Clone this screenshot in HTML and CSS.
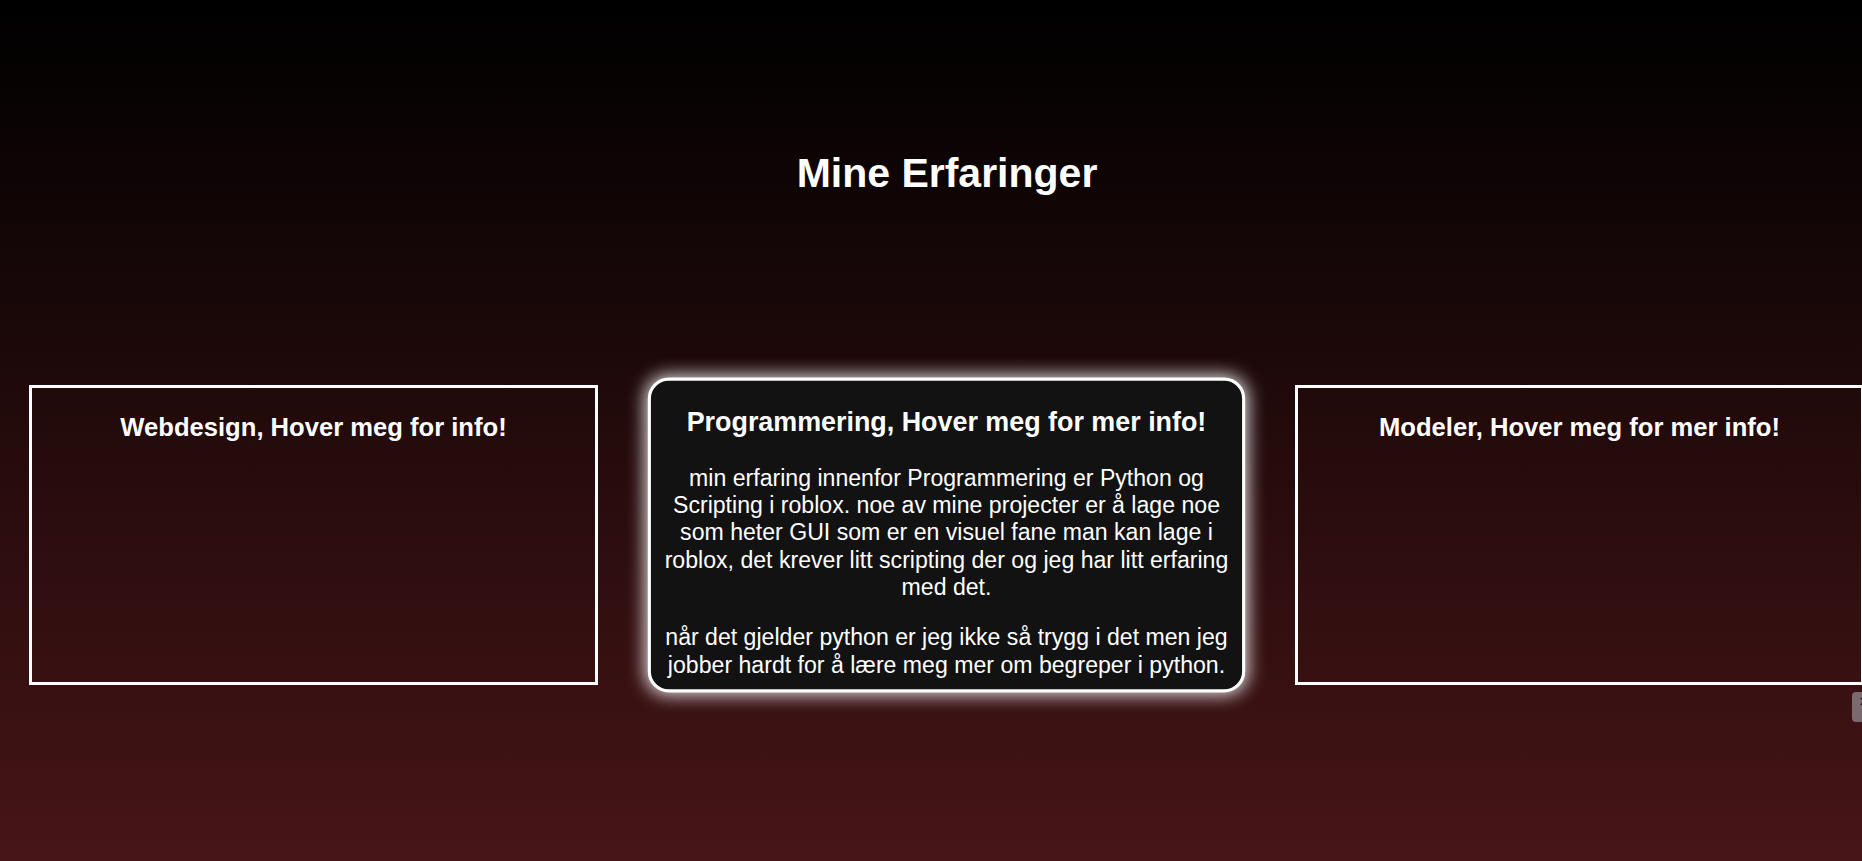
FILE: index.html
```html
<!DOCTYPE html>
<html lang="no">
<head>
<meta charset="utf-8">
<title>Mine Erfaringer</title>
<link rel="stylesheet" href="styles.css">
</head>
<body>
<div class="page">
  <header class="header">
    <h1 class="title">Mine Erfaringer</h1>
  </header>
  <section class="cards">
    <div class="card">
      <h2 class="card-title">Webdesign, Hover meg for info!</h2>
    </div>
    <div class="card card-active">
      <h2 class="card-title">Programmering, Hover meg for mer info!</h2>
      <p class="card-text">min erfaring innenfor Programmering er Python og Scripting i roblox. noe av mine projecter er å lage noe som heter GUI som er en visuel fane man kan lage i roblox, det krever litt scripting der og jeg har litt erfaring med det.</p>
      <p class="card-text">når det gjelder python er jeg ikke så trygg i det men jeg jobber hardt for å lære meg mer om begreper i python.</p>
    </div>
    <div class="card">
      <h2 class="card-title">Modeler, Hover meg for mer info!</h2>
    </div>
  </section>
</div>
<div class="side-tab">x</div>
</body>
</html>
```
FILE: styles.css
```css
html, body {
  margin: 0;
  padding: 0;
  height: 100%;
  overflow: hidden;
}

body {
  background: linear-gradient(to bottom, #000000 0%, #471517 100%);
  font-family: "Liberation Sans", Arial, sans-serif;
  color: #ffffff;
}

.page {
  width: 1894px;
}

.header {
  padding-top: 150px;
  text-align: center;
}

.title {
  margin: 0;
  font-size: 41px;
  font-weight: bold;
}

.cards {
  display: flex;
  gap: 64px;
  padding: 0 29px;
  margin-top: 188px;
}

.card {
  box-sizing: border-box;
  flex: 0 0 569px;
  height: 300px;
  border: 3px solid #ffffff;
  text-align: center;
  padding: 0 10px;
}

.card-title {
  margin: 25px 0 26px;
  font-size: 25.6px;
  font-weight: bold;
}

.card-text {
  margin: 22px 0;
  font-size: 22px;
}

.card-active {
  background: #121212;
  border-radius: 20px;
  transform: scale(1.05);
  box-shadow: 0 0 16px 2px rgba(255, 255, 255, 0.85);
}

.side-tab {
  position: fixed;
  left: 1852px;
  top: 692px;
  width: 30px;
  height: 30px;
  border-radius: 4px;
  background: #7a6a70;
  color: #2a1a1e;
  font-size: 13px;
  font-weight: bold;
  line-height: 18px;
  padding-left: 8px;
  box-sizing: border-box;
}
```
